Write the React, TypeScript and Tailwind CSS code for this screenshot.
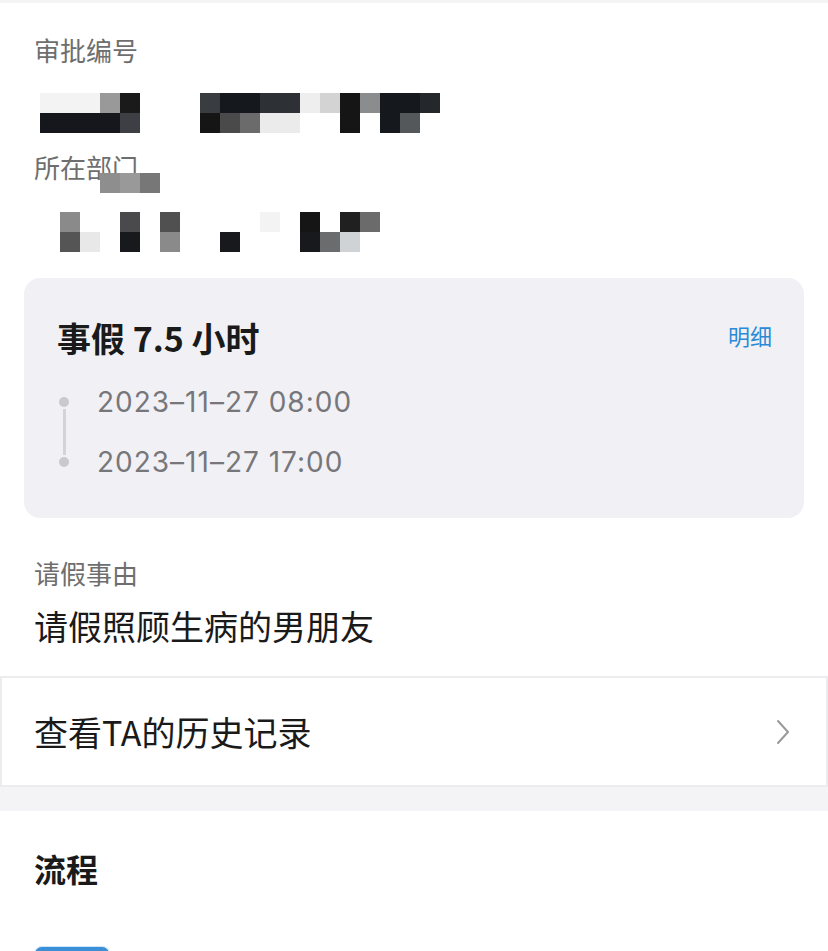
import React from 'react';

const FONT = { fontFamily: '"Noto Sans CJK SC", "Noto Sans", sans-serif' };

// pixelated (redacted) blocks, 20px cells
const W = 'bg-white';
const mosaicNo: string[][] = [
  ['bg-[#f3f3f3]', 'bg-[#f3f3f3]', 'bg-[#f3f3f3]', 'bg-[#999999]', 'bg-[#1a1a1a]', W, W, W, 'bg-[#3a3d40]', 'bg-[#15181d]', 'bg-[#15181d]', 'bg-[#2d3034]', 'bg-[#2d3034]', 'bg-[#eeeeee]', 'bg-[#d3d3d3]', 'bg-[#151515]', 'bg-[#8a8c8e]', 'bg-[#15181c]', 'bg-[#15181c]', 'bg-[#25282b]'],
  ['bg-[#15171c]', 'bg-[#15171c]', 'bg-[#15171c]', 'bg-[#15171c]', 'bg-[#3d3f44]', W, W, W, 'bg-[#151515]', 'bg-[#4a4a4a]', 'bg-[#6b6b6b]', 'bg-[#ebebeb]', 'bg-[#ebebeb]', W, W, 'bg-[#151515]', W, 'bg-[#15181c]', 'bg-[#55585b]', W],
];
const mosaicDept: string[][] = [
  ['bg-[#8a8a8a]', W, W, 'bg-[#4a4a4c]', W, 'bg-[#505050]', W, W, W, W, 'bg-[#f3f3f3]', W, 'bg-[#151515]', W, 'bg-[#202020]', 'bg-[#6b6b6b]'],
  ['bg-[#555555]', 'bg-[#e8e8e8]', W, 'bg-[#18191c]', W, 'bg-[#8a8a8a]', W, W, 'bg-[#18191c]', W, W, W, 'bg-[#18191c]', 'bg-[#6a6c6e]', 'bg-[#d0d3d6]', W],
];

function Mosaic({ rows }: { rows: string[][] }) {
  return (
    <div className="flex flex-col">
      {rows.map((row, i) => (
        <div key={i} className="flex">
          {row.map((c, j) => (
            <div key={j} className={`w-5 h-5 ${c}`} />
          ))}
        </div>
      ))}
    </div>
  );
}

export default function App() {
  return (
    <div className="w-[828px] h-[951px] overflow-hidden bg-white" style={FONT}>
      <div className="h-[3px] bg-[#f4f4f4]" />

      {/* Basic info */}
      <div className="px-[34px]">
        <div className="mt-[29px] text-[26px] leading-[36px] text-[#6e6e6e]">审批编号</div>
        <div className="mt-[25px] ml-[6px]">
          <Mosaic rows={mosaicNo} />
        </div>
        <div className="relative mt-[16px] text-[26px] leading-[36px] text-[#6e6e6e]">
          所在部门
          <div className="absolute left-[66px] top-[24px] flex">
            <div className="w-5 h-5 bg-[#8e8e8e]" />
            <div className="w-5 h-5 bg-[#999999]" />
            <div className="w-5 h-5 bg-[#777777]" />
          </div>
        </div>
        <div className="mt-[27px] ml-[26px]">
          <Mosaic rows={mosaicDept} />
        </div>
      </div>

      {/* Leave card */}
      <div className="mx-[24px] mt-[26px] rounded-[16px] bg-[#f1f1f5] pl-[33px] pr-[32px] pt-[38px] pb-[36px]">
        <div className="flex items-center justify-between">
          <div className="text-[34px] leading-[44px] font-bold text-[#1a1a1a]">事假 7.5 小时</div>
          <div className="text-[22px] leading-[30px] text-[#2a8ad6] -mt-[6px]">明细</div>
        </div>
        <div className="mt-[22px] flex gap-[26px]">
          <div className="w-[14px] flex flex-col items-center py-[15px]">
            <div className="w-[10px] h-[10px] rounded-full bg-[#c9c9ce]" />
            <div className="w-[3px] flex-1 bg-[#d3d3d8] my-[2px]" />
            <div className="w-[10px] h-[10px] rounded-full bg-[#c9c9ce]" />
          </div>
          <div className="flex flex-col gap-[20px] text-[28px] leading-[40px] tracking-[1px] text-[#77777b] font-['Inter',sans-serif]">
            <div>2023–11–27 08:00</div>
            <div>2023–11–27 17:00</div>
          </div>
        </div>
      </div>

      {/* Reason */}
      <div className="px-[34px]">
        <div className="mt-[37px] text-[26px] leading-[36px] text-[#6e6e6e]">请假事由</div>
        <div className="mt-[12px] text-[34px] leading-[46px] text-[#1a1a1a]">请假照顾生病的男朋友</div>
      </div>

      {/* History row */}
      <div className="mt-[27px] h-[111px] border-2 border-[#ececee] flex items-center justify-between pl-[32px] pr-[36px]">
        <div className="text-[34px] leading-[46px] text-[#1a1a1a]">查看TA的历史记录</div>
        <svg width="14" height="26" viewBox="0 0 14 26" fill="none">
          <path d="M2 2 L12 13 L2 24" stroke="#9a9a9e" strokeWidth="2" strokeLinecap="round" strokeLinejoin="round" />
        </svg>
      </div>
      <div className="h-[24px] bg-[#f4f4f6]" />

      {/* Flow */}
      <div className="px-[34px]">
        <div className="mt-[35px] text-[32px] leading-[44px] font-bold text-[#1a1a1a]">流程</div>
        <div className="mt-[56px] w-[76px] h-[20px] rounded-t-[8px] bg-[#3a8fd6] border border-[#cfe6f8]" />
      </div>
    </div>
  );
}
